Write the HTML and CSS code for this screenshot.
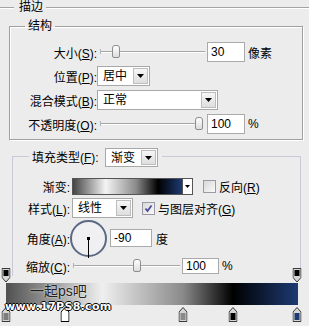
FILE: index.html
```html
<!DOCTYPE html>
<html lang="zh-CN">
<head>
    <meta charset="UTF-8">
    <meta name="viewport" content="width=device-width, initial-scale=1.0">
    <title>描边</title>
    <link rel="stylesheet" href="styles.css">
</head>
<body>
<div class="panel">

    <div class="panel-title">
        <span class="rule rule-short"></span>
        <span class="panel-name">描边</span>
        <span class="rule"></span>
    </div>

    <fieldset class="group group-structure">
        <legend>结构</legend>

        <div class="row">
            <span class="row-label">大小(<u>S</u>):</span>
            <div class="slider slider-size"><span class="thumb" style="left: 12px"></span></div>
            <input class="num num-size" type="text" value="30">
            <span class="unit">像素</span>
        </div>

        <div class="row">
            <span class="row-label">位置(<u>P</u>):</span>
            <div class="combo combo-position">
                <span class="combo-value">居中</span>
                <span class="combo-btn"><svg width="7" height="4" viewBox="0 0 7 4"><path d="M0 0H7L3.5 4Z" fill="#000"/></svg></span>
            </div>
        </div>

        <div class="row">
            <span class="row-label">混合模式(<u>B</u>):</span>
            <div class="combo combo-blend">
                <span class="combo-value">正常</span>
                <span class="combo-btn"><svg width="7" height="4" viewBox="0 0 7 4"><path d="M0 0H7L3.5 4Z" fill="#000"/></svg></span>
            </div>
        </div>

        <div class="row">
            <span class="row-label">不透明度(<u>O</u>):</span>
            <div class="slider slider-opacity"><span class="thumb" style="left: 95px"></span></div>
            <input class="num num-opacity" type="text" value="100">
            <span class="unit">%</span>
        </div>
    </fieldset>

    <fieldset class="group group-fill">
        <legend>
            <span class="legend-label">填充类型(<u>F</u>):</span>
            <div class="combo combo-type">
                <span class="combo-value">渐变</span>
                <span class="combo-btn"><svg width="7" height="4" viewBox="0 0 7 4"><path d="M0 0H7L3.5 4Z" fill="#000"/></svg></span>
            </div>
        </legend>

        <div class="row row-gradient">
            <span class="row-label">渐变:</span>
            <div class="gradient-picker">
                <span class="gradient-fill"></span>
                <span class="gradient-btn"><svg width="5" height="3" viewBox="0 0 5 3"><path d="M0 0H5L2.5 3Z" fill="#000"/></svg></span>
            </div>
            <span class="check check-reverse"></span>
            <span class="check-text">反向(<u>R</u>)</span>
        </div>

        <div class="row row-style">
            <span class="row-label">样式(<u>L</u>):</span>
            <div class="combo combo-style">
                <span class="combo-value">线性</span>
                <span class="combo-btn"><svg width="7" height="4" viewBox="0 0 7 4"><path d="M0 0H7L3.5 4Z" fill="#000"/></svg></span>
            </div>
            <span class="check check-align"><svg width="11" height="11" viewBox="0 0 11 11"><path d="M2.5 5.5L4.5 8L8.5 2.5" fill="none" stroke="#4b4b9c" stroke-width="1.8"/></svg></span>
            <span class="check-text">与图层对齐(<u>G</u>)</span>
        </div>

        <div class="row row-angle">
            <span class="row-label">角度(<u>A</u>):</span>
            <div class="dial">
                <span class="dial-needle"></span>
                <span class="dial-dot"></span>
            </div>
            <input class="num num-angle" type="text" value="-90">
            <span class="unit">度</span>
        </div>

        <div class="row row-scale">
            <span class="row-label">缩放(<u>C</u>):</span>
            <div class="slider slider-scale"><span class="thumb" style="left: 60px"></span></div>
            <input class="num num-scale" type="text" value="100">
            <span class="unit">%</span>
        </div>
    </fieldset>

    <div class="editor">
        <div class="editor-bar">
            <svg class="stop stop-top" style="left: 0%" width="9" height="15" viewBox="0 0 9 15"><path d="M0.5 0.5H8.5V9.5L4.5 14L0.5 9.5Z" fill="#d6d6d6" stroke="#3a3a3a"/><rect x="2" y="2" width="5" height="6" fill="#000"/></svg>
            <svg class="stop stop-top" style="left: 99.7%" width="9" height="15" viewBox="0 0 9 15"><path d="M0.5 0.5H8.5V9.5L4.5 14L0.5 9.5Z" fill="#d6d6d6" stroke="#3a3a3a"/><rect x="2" y="2" width="5" height="6" fill="#000"/></svg>

            <svg class="stop stop-bottom" style="left: 0%" width="9" height="15" viewBox="0 0 9 15"><path d="M4.5 0.5L8.5 5V14.5H0.5V5Z" fill="#d6d6d6" stroke="#3a3a3a"/><rect x="2" y="6" width="5" height="7" fill="#7c7c7c"/></svg>
            <svg class="stop stop-bottom stop-selected" style="left: 20.2%" width="9" height="15" viewBox="0 0 9 15"><path d="M4.5 0.5L8.5 5V14.5H0.5V5Z" fill="#fff" stroke="#000"/><rect x="2" y="6" width="5" height="7" fill="#fff"/></svg>
            <svg class="stop stop-bottom" style="left: 60.6%" width="9" height="15" viewBox="0 0 9 15"><path d="M4.5 0.5L8.5 5V14.5H0.5V5Z" fill="#d6d6d6" stroke="#3a3a3a"/><rect x="2" y="6" width="5" height="7" fill="#8a8a8a"/></svg>
            <svg class="stop stop-bottom" style="left: 77.7%" width="9" height="15" viewBox="0 0 9 15"><path d="M4.5 0.5L8.5 5V14.5H0.5V5Z" fill="#d6d6d6" stroke="#3a3a3a"/><rect x="2" y="6" width="5" height="7" fill="#000"/></svg>
            <svg class="stop stop-bottom" style="left: 99.7%" width="9" height="15" viewBox="0 0 9 15"><path d="M4.5 0.5L8.5 5V14.5H0.5V5Z" fill="#d6d6d6" stroke="#3a3a3a"/><rect x="2" y="6" width="5" height="7" fill="#1d3a73"/></svg>

            <span class="mark mark-cn">一起ps吧</span>
            <span class="mark mark-url">www.17PS8.com</span>
        </div>
    </div>

</div>
</body>
</html>
```

FILE: styles.css
```css
body {
    margin: 0;
    background-color: #ececec;
    font-family: "Liberation Sans", "Noto Sans CJK SC", sans-serif;
    font-size: 12px;
    color: #000;
}
.panel {
    width: 309px;
    height: 326px;
    overflow: hidden;
}
u {
    text-decoration: underline;
    text-underline-offset: 1px;
}
/* --- top title line --- */
.panel-title {
    display: flex;
    align-items: center;
    height: 15px;
}
.rule {
    flex: 1;
    height: 0;
    border-top: 1px solid #a3a3a3;
    border-bottom: 1px solid #fff;
}
.rule-short {
    flex: 0 0 14px;
}
.panel-name {
    padding: 0 3px 0 5px;
    line-height: 15px;
}
/* --- group boxes --- */
.group {
    margin: 0;
    padding: 0;
    min-width: 0;
    box-sizing: border-box;
}
.group legend {
    padding: 0 3px;
    line-height: 14px;
}
.group-structure {
    margin: 4px 6px 0 9px;
    width: 294px;
    border: 1px solid #a0a0a0;
    box-shadow: inset 1px 1px 0 #fff, 1px 1px 0 #fff;
    padding: 9px 0 5px 0;
}
.group-structure legend {
    margin-left: 15px;
}
.group-fill {
    margin: 5px 8px 0 12px;
    width: 289px;
    border: 1px solid #c9c9da;
    border-bottom: none;
    padding: 11px 0 2px 0;
}
.group-fill legend {
    display: flex;
    align-items: center;
    margin-left: 16px;
    padding: 3px 4px 0 3px;
}
.legend-label {
    width: 73px;
}
/* --- rows --- */
.row {
    display: flex;
    align-items: center;
    height: 20px;
    margin-bottom: 4px;
}
.row:last-child {
    margin-bottom: 0;
}
.row-label {
    width: 87px;
    text-align: right;
    white-space: nowrap;
}
.group-fill .row-label {
    width: 57px;
}
.row-gradient {
    height: 17px;
    margin-bottom: 3px;
}
.row-style {
    margin-bottom: 2px;
}
.row-angle {
    height: 36px;
    margin-bottom: 2px;
}
.row-scale {
    height: 16px;
}
.unit {
    margin-left: 3px;
}
.row-angle .unit {
    margin-left: 4px;
}
/* --- sliders --- */
.slider {
    position: relative;
    height: 2px;
    border-top: 1px solid #a6a6a6;
    border-bottom: 1px solid #fff;
    box-sizing: border-box;
}
.slider::before {
    content: "";
    position: absolute;
    left: 0;
    top: -3px;
    width: 1px;
    height: 5px;
    background-color: #b4b4b4;
}
.thumb {
    position: absolute;
    top: -7px;
    width: 6px;
    height: 11px;
    border: 1px solid #8e8e8e;
    border-radius: 3px 3px 2px 2px;
    background: linear-gradient(#ffffff, #dcdcdc);
}
.slider-size {
    margin-left: 3px;
    width: 105px;
}
.slider-opacity {
    margin-left: 3px;
    width: 102px;
}
.slider-scale {
    margin-left: 3px;
    width: 107px;
}
/* --- number fields --- */
.num {
    box-sizing: border-box;
    height: 20px;
    margin: 0;
    padding: 0 0 0 3px;
    border: 1px solid #aaaaaa;
    background-color: #fff;
    font-family: "Liberation Sans", sans-serif;
    font-size: 12px;
    color: #000;
    outline: none;
}
.num-size {
    margin-left: 2px;
    width: 38px;
}
.num-opacity {
    margin-left: 5px;
    width: 38px;
}
.num-angle {
    margin-left: 3px;
    width: 42px;
    height: 18px;
}
.num-scale {
    margin-left: 2px;
    width: 37px;
    height: 16px;
}
/* --- combo boxes --- */
.combo {
    display: flex;
    align-items: stretch;
    box-sizing: border-box;
    height: 20px;
    border: 1px solid #a8a8a8;
    background-color: #fff;
}
.combo-value {
    flex: 1;
    padding-left: 5px;
    line-height: 18px;
}
.combo-btn {
    display: flex;
    align-items: center;
    justify-content: center;
    width: 13px;
    margin: 1px;
    border: 1px solid #bdbdbd;
    background: linear-gradient(#f6f6f6, #dedede);
}
.combo-position {
    width: 53px;
}
.combo-blend {
    width: 121px;
}
.combo-type {
    width: 53px;
    height: 19px;
}
.combo-style {
    margin-left: 2px;
    width: 61px;
}
/* --- gradient picker --- */
.gradient-picker {
    display: flex;
    margin-left: 2px;
    width: 121px;
    height: 17px;
    box-sizing: border-box;
    border: 1px solid #555;
}
.gradient-fill {
    flex: 1;
    background: linear-gradient(to right, #444 0%, #f4f4f4 30%, #8a8a8a 58%, #000 78%, #1d3a73 100%);
}
.gradient-btn {
    display: flex;
    align-items: center;
    justify-content: center;
    width: 9px;
    border-left: 1px solid #555;
    background-color: #fff;
}
/* --- checkboxes --- */
.check {
    display: flex;
    align-items: center;
    justify-content: center;
    box-sizing: border-box;
    width: 13px;
    height: 13px;
    border: 1px solid #9a9aa6;
    background: linear-gradient(135deg, #d8d8d8, #fafafa);
}
.check-reverse {
    margin-left: 10px;
}
.check-align {
    margin-left: 9px;
}
.check-text {
    margin-left: 3px;
}
/* --- angle dial --- */
.dial {
    position: relative;
    width: 37px;
    height: 37px;
    box-sizing: border-box;
    border: 2px solid #5b6a84;
    border-radius: 50%;
    background-color: #f0f0f2;
}
.dial-needle {
    position: absolute;
    left: 16px;
    top: 16px;
    width: 1px;
    height: 20px;
    background-color: #000;
}
.dial-dot {
    position: absolute;
    left: 15px;
    top: 15px;
    width: 3px;
    height: 3px;
    background-color: #000;
}
/* --- gradient editor --- */
.editor {
    margin-top: -8px;
    height: 58px;
    padding-top: 15px;
    box-sizing: border-box;
}
.editor-bar {
    position: relative;
    margin: 0 11px 0 6px;
    height: 22px;
    background: linear-gradient(to right, #505050 0%, #efefef 33%, #8a8a8a 60.6%, #000 77.7%, #1d3a73 100%);
}
.stop {
    position: absolute;
    transform: translateX(-50%);
}
.stop-top {
    top: -15px;
}
.stop-bottom {
    top: 24px;
}
.mark {
    position: absolute;
    white-space: nowrap;
}
.mark-cn {
    left: 24px;
    top: 1px;
    font-size: 14px;
    line-height: 15px;
    color: #222;
    text-shadow: 0 0 2px #fff;
}
.mark-url {
    left: -1px;
    top: 18px;
    font-family: "DejaVu Sans", sans-serif;
    font-weight: bold;
    font-size: 11px;
    line-height: 12px;
    letter-spacing: 0.3px;
    color: #fff;
    text-shadow: 1px 0 #000, -1px 0 #000, 0 1px #000, 0 -1px #000;
}
```
